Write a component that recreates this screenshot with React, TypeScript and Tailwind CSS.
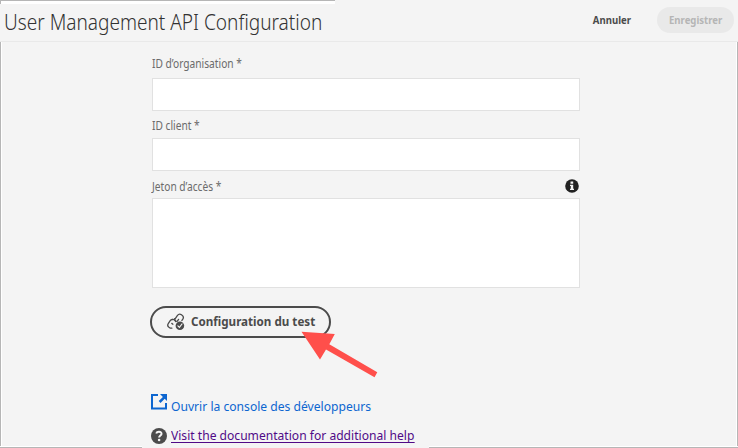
import type { ReactNode } from "react";

const font = "font-['Noto_Sans','Open_Sans',sans-serif]";

function Label({ children, className }: { children: ReactNode; className: string }) {
  return (
    <label className={`block origin-left whitespace-nowrap text-[12px] leading-4 text-[#6b6b6b] ${className}`}>
      {children}
    </label>
  );
}

function LinkCheckIcon() {
  return (
    <svg width="18" height="18" viewBox="0 0 18 18" fill="none" stroke="#4b4b4b" strokeWidth="1.3" strokeLinecap="round">
      <path d="M8.1 5.8 10.5 2.4a2.9 2.9 0 0 1 4-.6l.6.5a2.9 2.9 0 0 1 .6 4l-.8 1.1" />
      <path d="M7.5 5.7c.1 1.2.7 2.1 1.7 2.6M10.3 8.2l1.3-1.8" />
      <path d="M5.2 6.5c-.8.1-1.5.5-2 1.2L1.4 10.3a2.9 2.9 0 0 0 .6 4l.6.4c.7.5 1.5.6 2.3.4" />
      <path d="M5.3 6.5c1.6-.2 3 .7 3.4 2.2M5.9 11.2l-1.1-.8" />
      <circle cx="12.9" cy="12.8" r="4.3" fill="#4b4b4b" stroke="none" />
      <path d="m10.9 12.9 1.5 1.5 2.6-3.4" stroke="#f4f4f4" strokeWidth="1.2" />
    </svg>
  );
}

export default function App() {
  return (
    <div className={`relative flex h-[448px] w-[738px] flex-col overflow-hidden bg-[#f4f4f4] ${font}`}>
      <header className="flex h-[42px] shrink-0 items-start justify-between border-b border-[#e9e9e9] pl-[4px] pr-1">
        <h1 className="mt-2 origin-left scale-x-[0.907] whitespace-nowrap text-[21px] font-light leading-[28px] text-[#323232]">
          User Management API Configuration
        </h1>
        <div className="flex pt-[7px]">
          <button className="mr-[23px] h-[26px] scale-x-[0.87] text-[11px] font-bold text-[#4b4b4b]">Annuler</button>
          <button className="flex h-[26px] w-[77px] items-center justify-center rounded-full bg-[#e9e9e9] text-[11px] font-bold text-[#b5b5b5]">
            <span className="scale-x-[0.87]">Enregistrer</span>
          </button>
        </div>
      </header>
      <main className="flex min-h-0 flex-1 flex-col border-x border-[#b6b6b6] pl-[151px]">
        <Label className="mt-[14px] scale-x-[0.85]">ID d’organisation *</Label>
        <input className="mt-[6px] h-[33px] w-[428px] shrink-0 border border-[#e1e1e1] bg-white outline-none" />
        <Label className="mt-[7px] scale-x-[0.85]">ID client *</Label>
        <input className="mt-[4px] h-[33px] w-[428px] shrink-0 border border-[#e1e1e1] bg-white outline-none" />
        <div className="mt-[8px] flex w-[428px] justify-between">
          <Label className="scale-x-[0.85]">Jeton d’accès *</Label>
          <svg width="14" height="14" viewBox="0 0 14 14" className="mr-px">
            <circle cx="7" cy="7" r="6.8" fill="#222" />
            <path d="M5.5 2.5h2.7v2.2H5.5zM5 5.7h3.2v4H9v1.4H5V9.700h.8V7.100H5z" fill="#f4f4f4" />
          </svg>
        </div>
        <textarea className="mt-[3px] h-[90px] w-[428px] shrink-0 resize-none border border-[#e1e1e1] bg-white outline-none" />
        <button className="-ml-[2px] mt-[18px] flex h-8 w-[181px] shrink-0 items-center rounded-full border-2 border-[#4b4b4b] pl-[15px]">
          <LinkCheckIcon />
          <span className="ml-[6px] origin-left scale-x-[0.93] whitespace-nowrap text-[12.5px] font-bold text-[#4b4b4b]">
            Configuration du test
          </span>
        </button>
        <a className="mt-[55px] flex h-[20px] items-start text-[#0d66d0]">
          <svg width="16" height="17" viewBox="0 0 16 17" className="-ml-px shrink-0">
            <path d="M7 2H1v13.500h14V10" fill="none" stroke="#0d66d0" strokeWidth="2" />
            <path d="M9 1h7v7l-2.300-2.300-4.200 4.200-1.800-1.800 4.200-4.200z" fill="#0d66d0" />
          </svg>
          <span className="ml-[4px] mt-[5px] origin-left scale-x-[0.932] whitespace-nowrap text-[13px] leading-4">
            Ouvrir la console des développeurs
          </span>
        </a>
        <a className="mt-[14px] flex h-[20px] items-start text-[#500a87]">
          <svg width="16" height="16" viewBox="0 0 16 16" className="-ml-px mt-px shrink-0">
            <circle cx="8" cy="8" r="8" fill="#4b4b4b" />
            <path d="M5.200 5.500C5.700 4.100 7 3.600 8.200 3.700c1.500.1 2.400 1 2.300 2.200C10.400 7.500 8.100 7.700 8.100 9.600" fill="none" stroke="#f4f4f4" strokeWidth="2" />
            <circle cx="8.100" cy="12" r="1.300" fill="#f4f4f4" />
          </svg>
          <span className="ml-[4px] mt-px origin-left scale-x-[0.93] whitespace-nowrap border-b border-[#500a87] text-[13px] leading-[14px]">
            Visit the documentation for additional help
          </span>
        </a>
      </main>
      <div className="absolute left-0 top-0 h-1 w-[335px] border-l border-t border-[#b6b6b6] bg-white" />
      <div className="absolute bottom-0 left-0 h-[2px] w-[142px] border-b border-[#b6b6b6] bg-white" />
      <div className="absolute bottom-0 right-0 h-[2px] w-[309px] border-b border-[#b6b6b6] bg-white" />
      <div className="absolute bottom-px left-px h-[405px] w-px bg-white" />
      <div className="absolute bottom-px right-px h-[405px] w-px bg-white" />
      <svg className="absolute left-[300px] top-[330px]" width="80" height="50" viewBox="0 0 80 50">
        <path d="M1.500 1.800 34.800 4 29.300 14.200 77.300 42.300 74.500 47.300 26 19.400 20 29.500Z" fill="#ff4f4b" />
      </svg>
    </div>
  );
}
